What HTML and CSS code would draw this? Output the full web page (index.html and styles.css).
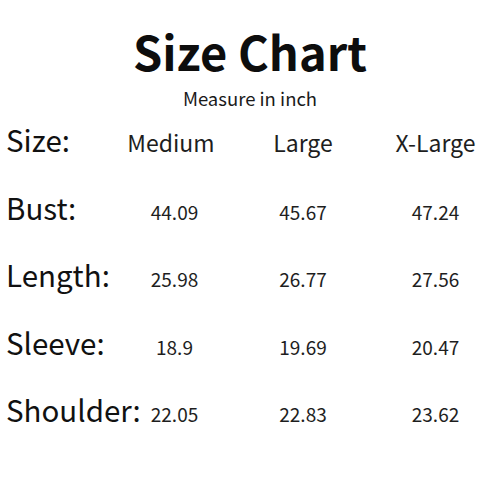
FILE: index.html
```html
<!DOCTYPE html>
<html>
<head>
<meta charset="utf-8">
<link rel="stylesheet" href="styles.css">
</head>
<body>
<main class="page">
  <h1 class="title">Size Chart</h1>
  <p class="subtitle">Measure in inch</p>
  <div class="chart">
    <div class="row head">
      <span class="label">Size:</span>
      <span class="cell">Medium</span>
      <span class="cell">Large</span>
      <span class="cell">X-Large</span>
    </div>
    <div class="row">
      <span class="label">Bust:</span>
      <span class="cell">44.09</span>
      <span class="cell">45.67</span>
      <span class="cell">47.24</span>
    </div>
    <div class="row">
      <span class="label">Length:</span>
      <span class="cell">25.98</span>
      <span class="cell">26.77</span>
      <span class="cell">27.56</span>
    </div>
    <div class="row">
      <span class="label">Sleeve:</span>
      <span class="cell">18.9</span>
      <span class="cell">19.69</span>
      <span class="cell">20.47</span>
    </div>
    <div class="row">
      <span class="label">Shoulder:</span>
      <span class="cell">22.05</span>
      <span class="cell">22.83</span>
      <span class="cell">23.62</span>
    </div>
  </div>
</main>
</body>
</html>
```

FILE: styles.css
```css
html, body {
  margin: 0;
  padding: 0;
  background: #ffffff;
}
body {
  width: 500px;
  height: 500px;
  overflow: hidden;
  font-family: "Noto Sans CJK SC", "Noto Sans", sans-serif;
  color: #111111;
}
.page {
  display: flex;
  flex-direction: column;
}
.title {
  margin: 21px 0 0;
  text-align: center;
  font-size: 47px;
  font-weight: 700;
  line-height: 60px;
  color: #0d0d0d;
}
.subtitle {
  margin: 5px 0 0;
  text-align: center;
  font-size: 18.5px;
  line-height: 24px;
  color: #1a1a1a;
}
.chart {
  display: flex;
  flex-direction: column;
  padding-left: 6px;
  margin-top: 5px;
}
.row {
  display: grid;
  grid-template-columns: 101px 128px 136px 129px;
  align-items: baseline;
  height: 67.5px;
}
.label {
  font-size: 29.5px;
  font-weight: 400;
  line-height: 48px;
  color: #111111;
  white-space: nowrap;
}
.cell {
  text-align: center;
  font-size: 19px;
  font-weight: 400;
  line-height: 48px;
  color: #1e1e1e;
}
.row:not(.head) .cell:nth-child(2) {
  padding-left: 7px;
}
.head .cell {
  font-size: 23px;
}
```
